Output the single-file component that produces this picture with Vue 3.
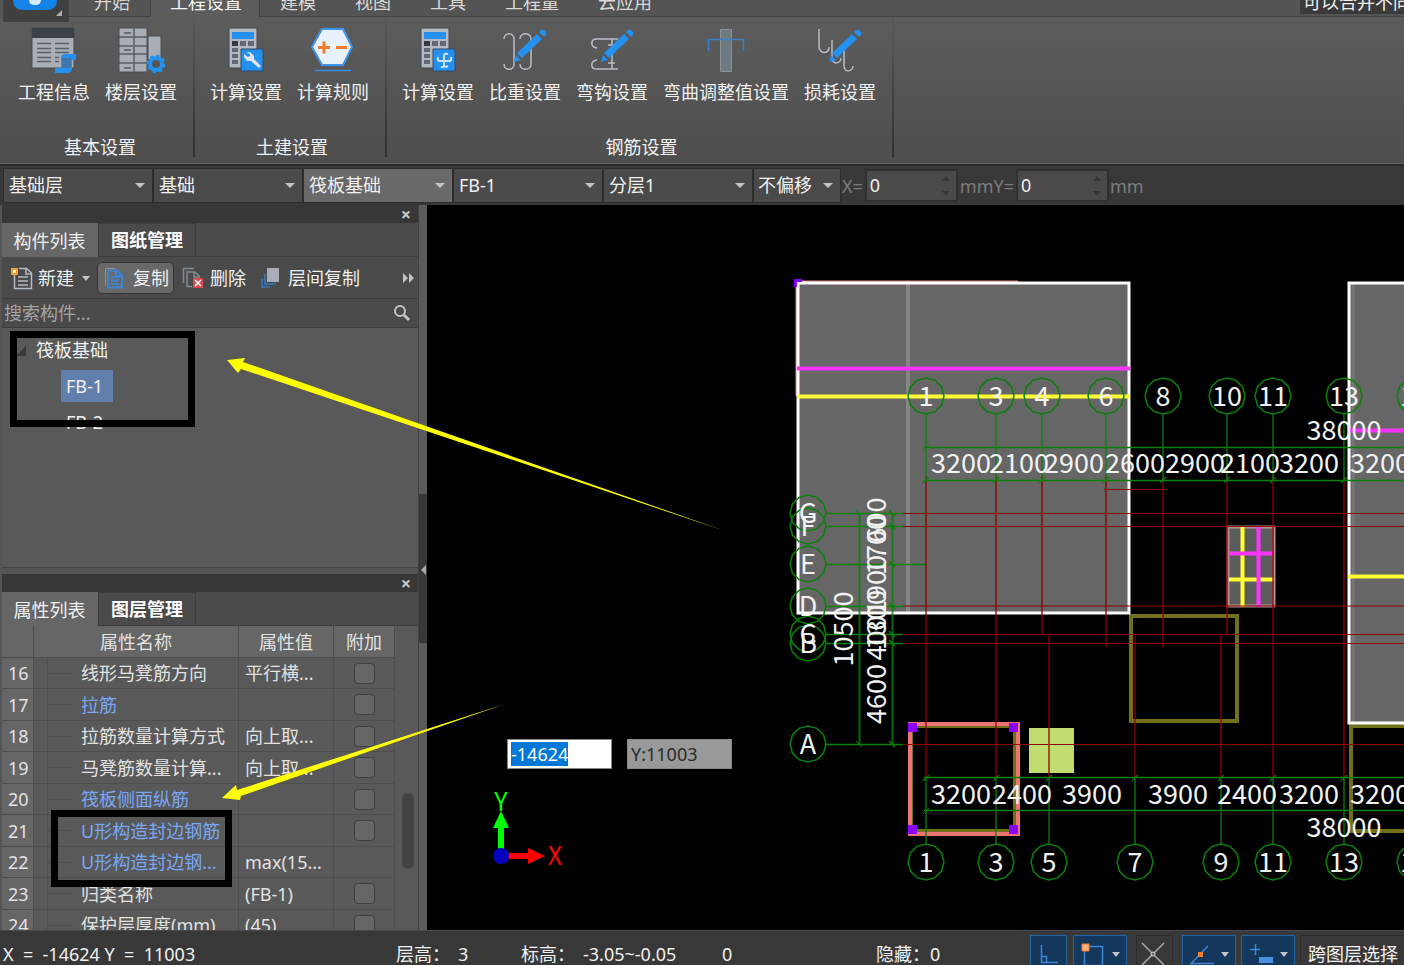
<script setup>
import { ref, onMounted } from 'vue'

const xField = ref(null)

const tabs = ['开始', '工程设置', '建模', '视图', '工具', '工程量', '云应用']
const groups = [
  { title: '基本设置', tools: [{ icon: 'info', label: '工程信息' }, { icon: 'floors', label: '楼层设置' }] },
  { title: '土建设置', tools: [{ icon: 'calc', label: '计算设置' }, { icon: 'rule', label: '计算规则' }] },
  {
    title: '钢筋设置',
    tools: [
      { icon: 'calcbar', label: '计算设置' },
      { icon: 'weight', label: '比重设置' },
      { icon: 'hook', label: '弯钩设置' },
      { icon: 'bend', label: '弯曲调整值设置' },
      { icon: 'loss', label: '损耗设置' }
    ]
  }
]
const pickers = [
  { name: '楼层', value: '基础层' },
  { name: '类别', value: '基础' },
  { name: '构件类型', value: '筏板基础', on: true },
  { name: '构件', value: 'FB-1' },
  { name: '分层', value: '分层1' },
  { name: '偏移', value: '不偏移', small: true }
]
const rows = [
  { n: 16, name: '线形马凳筋方向', value: '平行横...', check: true },
  { n: 17, name: '拉筋', value: '', check: true, link: true },
  { n: 18, name: '拉筋数量计算方式', value: '向上取...', check: true },
  { n: 19, name: '马凳筋数量计算...', value: '向上取...', check: true },
  { n: 20, name: '筏板侧面纵筋', value: '', check: true, link: true },
  { n: 21, name: 'U形构造封边钢筋', value: '', check: true, link: true },
  { n: 22, name: 'U形构造封边钢...', value: 'max(15...', check: false, link: true },
  { n: 23, name: '归类名称', value: '(FB-1)', check: true },
  { n: 24, name: '保护层厚度(mm)', value: '(45)', check: true }
]

const ring = Array.from({ length: 12 }, (_, i) => {
  const a = (i * Math.PI) / 6
  return `${Math.round(Math.cos(a) * 180) / 10},${Math.round(Math.sin(a) * 180) / 10}`
}).join(' ')

const topAxes = [[926, '1'], [996, '3'], [1042, '4'], [1106, '6'], [1163, '8'], [1227, '10'], [1273, '11'], [1344, '13'], [1415, '14']]
const bottomAxes = [[926, '1'], [996, '3'], [1049, '5'], [1135, '7'], [1221, '9'], [1273, '11'], [1344, '13'], [1415, '14']]
const sideAxes = [[513, 'G'], [526, 'F'], [564, 'E'], [606, 'D'], [634, 'C'], [643, 'B'], [744, 'A']]
const topDims = [[961, '3200'], [1019, '2100'], [1074, '2900'], [1135, '2600'], [1195, '2900'], [1250, '2100'], [1309, '3200'], [1380, '3200']]
const bottomDims = [[961, '3200'], [1022, '2400'], [1092, '3900'], [1178, '3900'], [1247, '2400'], [1309, '3200'], [1380, '3200']]
const sideDims = [[520, '600'], [545, '1700'], [585, '1900'], [620, '1300'], [638, '400'], [694, '4600']]
const redColumns = [[926, 476, 777], [996, 476, 777], [1042, 476, 634], [1106, 476, 647], [1163, 476, 647], [1227, 476, 634], [1273, 476, 777], [1344, 476, 777], [1049, 634, 777], [1135, 634, 777], [1221, 634, 777]]

onMounted(() => {
  xField.value.focus()
  xField.value.select()
})
</script>

<template>
  <div class="app">
    <header class="tabbar">
      <button class="logo" aria-label="菜单">
        <svg width="66" height="22" viewBox="0 0 66 22">
          <path d="M10 -8h44v8q0 10-11 10h-22q-11 0-11-10z" fill="#1683e8" />
          <path d="M26 0h12q0 5-6 5t-6-5z" fill="#d8ebff" />
          <path d="M59 10v6h-6z" fill="#b0b0b0" />
        </svg>
      </button>
      <nav class="tabs">
        <button v-for="(t, i) in tabs" :key="t" :class="{ first: i === 0, active: i === 1 }">{{ t }}</button>
      </nav>
      <div class="hint">可以合并不同层</div>
    </header>

    <section class="ribbon">
      <div v-for="g in groups" :key="g.title" class="group">
        <div class="tools">
          <button v-for="t in g.tools" :key="t.icon" class="tool">
            <svg width="48" height="48" viewBox="0 0 48 48" fill="none">
              <template v-if="t.icon === 'info'">
                <path d="M2 2h42v40H2z" fill="#a9adb6" stroke="#484c52" />
                <path d="M2 2h42v10H2z" fill="#3b3f48" />
                <path d="M7 17.500h14M25 17.500h14M7 22.500h14M25 22.500h14M7 26.500h14M25 26.500h14M7 31.500h14M25 31.500h4M7 35.500h14M25 35.500h4" stroke="#5b5f68" stroke-width="1.500" />
                <path d="M31 31q0-3 4-3h11v6h-4v8q0 5-4 5H25v-5h6z" fill="#2490f0" />
                <path d="M32 32h9v10h-9z" fill="#3f74ac" />
              </template>
              <template v-else-if="t.icon === 'floors'">
                <path d="M2 2h28v44H2z" fill="#a9adb6" stroke="#484c52" />
                <path d="M31 10h13v24H31z" fill="#a9adb6" stroke="#484c52" />
                <path d="M17 2v44M2 11h28M2 20h28M2 28h28M2 37h28M7 7h7M7 24h7M7 42h7" stroke="#585d66" stroke-width="1.500" />
                <circle cx="39" cy="38" r="6" fill="#555" stroke="#2490f0" stroke-width="4" />
                <circle cx="39" cy="38" r="8" stroke="#2490f0" stroke-width="3" stroke-dasharray="3 3.300" />
              </template>
              <template v-else-if="t.icon === 'calc' || t.icon === 'calcbar'">
                <path d="M7 2h28v40H7z" fill="#b4b8c1" stroke="#40464e" />
                <path d="M10 6h22v7H10z" fill="#2490f0" />
                <path d="M10 15h6v5h-6z" fill="#343943" />
                <path d="M18 15h6v5h-6zM26 15h6v5h-6zM10 22h6v4h-6zM10 28h6v4h-6zM10 34h6v4h-6z" fill="#626872" />
                <path d="M19 23h22v22H19z" fill="#2490f0" stroke="#344a62" />
                <path v-if="t.icon === 'calc'" d="M24 27l4-1 4 4 0 3 7 7-2 2-8-7-4 0-3-4v-3l4 3 2-1 0-2z" fill="#dfe5ee" />
                <path v-else d="M34 28q-4-1-4 2v9q0 3-3 2M24 31q-1 4 2 4h9q3 0 2-4M34 40q-3 2-4-1" stroke="#cfe4fa" stroke-width="2" />
              </template>
              <template v-else-if="t.icon === 'rule'">
                <path d="M3 21L13 3h21l9 18-9 18H13z" fill="#e8f2ff" stroke="#3e95ec" stroke-width="2" />
                <path d="M9 21.500h12M15 15.500v12M27 21.500h11" stroke="#f07c2c" stroke-width="3" />
                <path d="M6 44.500h36" stroke="#3e8fe0" stroke-width="1.500" />
              </template>
              <template v-else-if="t.icon === 'bend'">
                <path d="M18.500 3.500h11v42h-11z" fill="#6f7b80" stroke="#87949a" />
                <path d="M6.500 25V13.500h35V25" stroke="#3f80c4" stroke-width="1.500" />
              </template>
              <template v-else>
                <path v-if="t.icon === 'weight'" d="M3 13c0-7 10-7 10 0v25c0 7-10 7-10 0M19 13c0-7 11-7 11 0v25c0 7-11 7-11 0" stroke="#b9bec6" stroke-width="1.500" />
                <path v-if="t.icon === 'hook'" d="M30 13H9c-7 0-7 8 0 9M30 43H9c-7 0-7-8 0-9M24 13v30M20 19h7M20 37h7" stroke="#b9bec6" stroke-width="1.500" />
                <path v-if="t.icon === 'loss'" d="M3 3v17c0 8 10 9 10 1M16 14v18c0 7 9 6 9 0M28 24v16c0 7 9 6 9 0" stroke="#b9bec6" stroke-width="1.500" />
                <path d="M13 36l2-7 5 5zM16 27L36 8l5 5-20 19zM38 6l2-2q2-1 3 0l2 2q1 2 0 3l-2 2z" fill="#2490f0" />
              </template>
            </svg>
            <span>{{ t.label }}</span>
          </button>
        </div>
        <h2>{{ g.title }}</h2>
      </div>
    </section>

    <section class="options">
      <div v-for="p in pickers" :key="p.name" class="picker" :class="{ on: p.on, small: p.small }">
        <select :aria-label="p.name"><option>{{ p.value }}</option></select>
      </div>
      <label for="off-x">X=</label>
      <div class="spin"><input id="off-x" type="text" value="0" /></div>
      <label for="off-y">mmY=</label>
      <div class="spin"><input id="off-y" type="text" value="0" /></div>
      <span class="unit">mm</span>
    </section>

    <main class="work">
      <aside class="side">
        <div class="panels">
          <section class="panel list">
            <div class="bar"><button aria-label="关闭">×</button></div>
            <div class="ptabs"><button class="active">构件列表</button><button>图纸管理</button></div>
            <div class="actions">
              <button class="new">
                <svg width="24" height="24" viewBox="0 0 24 24" fill="none">
                  <path d="M4.500 9v13.500h17V7l-5-4.500H9M16 3v5h5M8 11h10M8 15h10M8 19h10" stroke="#b4bbc2" stroke-width="1.500" />
                  <path d="M1 2h7v7H1z" fill="#f6a030" /><path d="M3 4h3v3H3z" fill="#fff0c0" />
                </svg>
                新建<i class="caret"></i>
              </button>
              <button class="copy">
                <svg width="24" height="24" viewBox="0 0 24 24" fill="none">
                  <path d="M3.500 20V2.500H13" stroke="#8b9298" />
                  <path d="M6 4.500h9l5 5v12H6zM9 11h8M9 14.500h8M9 18h8M14 5v5h5" stroke="#3c85d6" stroke-width="2" />
                </svg>
                复制
              </button>
              <button class="del">
                <svg width="24" height="24" viewBox="0 0 24 24" fill="none">
                  <path d="M2.500 17V2.500H13M11 20.500H6V6h8l5 5M13 6v5h6" stroke="#7f8b93" stroke-width="1.500" />
                  <path d="M12 12h10v10H12z" fill="#d84a50" /><path d="M14 14l6 6M20 14l-6 6" stroke="#fff" stroke-width="1.500" />
                </svg>
                删除
              </button>
              <button class="floorcopy">
                <svg width="24" height="24" viewBox="0 0 24 24" fill="none">
                  <path d="M7 2h12v14H7z" fill="#a9adb8" />
                  <path d="M5 8v10h11M2 13v8h8" stroke="#356fa8" stroke-width="2" />
                </svg>
                层间复制
              </button>
              <svg class="more" width="12" height="10" viewBox="0 0 12 10"><path d="M0 0l5 5-5 5zM6 0l5 5-5 5z" fill="#c4c4c4" /></svg>
            </div>
            <div class="search">
              <input type="text" placeholder="搜索构件..." aria-label="搜索构件" />
              <svg width="18" height="18" viewBox="0 0 18 18" fill="none"><circle cx="7" cy="7" r="5" stroke="#c4c4c4" stroke-width="2" /><path d="M11 11l5 5" stroke="#c4c4c4" stroke-width="3" /></svg>
            </div>
            <ul class="tree">
              <li class="root">筏板基础</li>
              <li><span class="sel">FB-1</span></li>
              <li><span>FB-2</span></li>
            </ul>
          </section>

          <section class="panel props">
            <div class="bar"><button aria-label="关闭">×</button></div>
            <div class="ptabs"><button class="active">属性列表</button><button>图层管理</button></div>
            <div class="grid">
              <table>
                <colgroup><col class="c1" /><col class="c2" /><col class="c3" /><col class="c4" /></colgroup>
                <thead><tr><th></th><th>属性名称</th><th>属性值</th><th>附加</th></tr></thead>
                <tbody>
                  <tr v-for="r in rows" :key="r.n">
                    <td class="num">{{ r.n }}</td>
                    <td class="name" :class="{ link: r.link }">{{ r.name }}</td>
                    <td class="val">{{ r.value }}</td>
                    <td class="chk"><input v-if="r.check" type="checkbox" :aria-label="r.name" /></td>
                  </tr>
                </tbody>
              </table>
              <div class="thumb"></div>
            </div>
          </section>
        </div>
        <div class="splitter">
          <svg width="6" height="10" viewBox="0 0 6 10"><path d="M6 0v10L1 5z" fill="#aaa" /></svg>
        </div>
      </aside>

      <section class="canvas">
        <svg class="drawing" width="100%" height="100%">
          <g transform="translate(-427 -205)" fill="none">
            <path d="M798 283h331v330H798zM1349 283h90v440h-90z" fill="#666" />
            <path d="M908 284v328" stroke="#858585" stroke-width="4" />
            <path d="M1353 284v438" stroke="#777" stroke-width="3" />
            <path d="M1131 616h106v105h-106zM1351 726h90v105h-90z" stroke="#70701a" stroke-width="4" />
            <path d="M1018 282H797V396" stroke="#d98585" stroke-width="3" />
            <path d="M798 283h331v330H798zM1349 283h90v440h-90z" stroke="#fff" stroke-width="3" />
            <path d="M797 368.500h333M1348 430.500h80" stroke="#ff33ff" stroke-width="4" />
            <path d="M797 396.500h333M1348 576.500h80" stroke="#ffff33" stroke-width="4" />
            <path d="M794 279h8v3h-5v5h-3z" fill="#8000ff" />

            <path d="M1228 527h46v79h-46z" fill="#5c5c5c" stroke="#b69090" stroke-width="3" />
            <path d="M1242.500 526v81M1229 579.500h45" stroke="#ffff33" stroke-width="4" />
            <path d="M1258.500 526v81M1229 553.500h45" stroke="#ff33ff" stroke-width="4" />

            <path d="M1029 728h45v45h-45z" fill="#c1dd70" />
            <path d="M911 726h104v105H911z" stroke="#70701a" stroke-width="4" />
            <path d="M910 724h108v110H910z" stroke="#ee7474" stroke-width="4" />
            <path d="M908 723h9v9h-9zM1009 723h9v9h-9zM908 825h9v9h-9zM1009 825h9v9h-9z" fill="#8c00ff" />

            <g stroke="#900000" stroke-opacity="0.650">
              <path v-for="c in redColumns" :key="c[0]" :d="`M${c[0]} ${c[1]}V${c[2]}`" stroke-width="2" />
            </g>
            <path d="M903 513.500h520M903 526.500h520M903 606h520M903 634.500h520M903 643.500h520M903 744.500h520M1104 489.500h61" stroke="#8a0000" />

            <g stroke="#0a800a">
              <path d="M924 447.500h500M924 480.500h500M924 777.500h500M924 810.500h500" stroke-width="1.500" />
              <path v-for="a in topAxes" :key="a[0]" :d="`M${a[0]} 414V480M${a[0] - 3} 483l6-6`" stroke-opacity="0.850" stroke-width="1.500" />
              <path v-for="a in bottomAxes" :key="a[0]" :d="`M${a[0]} 777V844M${a[0] - 3} 781l6-6`" stroke-opacity="0.850" stroke-width="1.500" />
              <path d="M923 451l6-6M923 814l6-6" />
              <path d="M859.500 513v232M892.500 513v232" stroke-width="2" stroke-opacity="0.800" />
              <path v-for="s in sideAxes" :key="s[0]" :d="`M826 ${s[0]}.5H${s[1] === 'E' ? 925 : 903}M889 ${s[0] - 3}l6 6`" stroke-width="1.500" />
              <path d="M856 510l6 6M856 741l6 6" />
              <g stroke-width="1.500">
                <polygon v-for="a in topAxes" :key="a[0]" :points="ring" :transform="`translate(${a[0]} 396)`" />
                <polygon v-for="a in bottomAxes" :key="a[0]" :points="ring" :transform="`translate(${a[0]} 862)`" />
                <polygon v-for="s in sideAxes" :key="s[0]" :points="ring" :transform="`translate(808 ${s[0]})`" />
              </g>
            </g>

            <g class="cad" fill="#f2f2f2" text-anchor="middle">
              <text v-for="a in topAxes" :key="a[0]" :x="a[0]" y="406">{{ a[1] }}</text>
              <text v-for="a in bottomAxes" :key="a[0]" :x="a[0]" y="872">{{ a[1] }}</text>
              <text v-for="s in sideAxes" :key="s[0]" x="808" :y="s[0] + 10">{{ s[1] }}</text>
              <text v-for="d in topDims" :key="d[0]" :x="d[0]" y="473">{{ d[1] }}</text>
              <text v-for="d in bottomDims" :key="d[0]" :x="d[0]" y="804">{{ d[1] }}</text>
              <text v-for="d in sideDims" :key="d[0]" :transform="`translate(886 ${d[0]}) rotate(-90)`">{{ d[1] }}</text>
              <text transform="translate(853 629) rotate(-90)">10500</text>
              <text x="1344" y="440">38000</text>
              <text x="1344" y="837">38000</text>
            </g>

            <path d="M498 850v-22h-5l8-17 8 17h-5v22z" fill="#0f0" />
            <path d="M507 853h21v-5l17 8-17 8v-5h-21z" fill="#f00" />
            <circle cx="501" cy="856" r="8" fill="#0000c0" />
            <g class="ucs" text-anchor="middle">
              <text x="501" y="811" fill="#0f0">Y</text>
              <text x="555" y="865" fill="#f00">X</text>
            </g>
          </g>
        </svg>
        <div class="coords">
          <input ref="xField" class="cx" type="text" value="-14624" aria-label="X" />
          <input class="cy" type="text" value="Y:11003" aria-label="Y" readonly />
        </div>
      </section>
    </main>

    <footer class="status">
      <span class="pos">X&nbsp; =&nbsp; -14624 Y&nbsp; =&nbsp; 11003</span>
      <span class="height">层高：<b>3</b></span>
      <span class="level">标高：<b>-3.05~-0.05</b></span>
      <span class="zero">0</span>
      <span class="hidden">隐藏：<b>0</b></span>
      <button class="sq on" aria-label="正交">
        <svg width="20" height="20" viewBox="0 0 20 20" fill="none"><path d="M2.500 1v17.500H19M2.500 12.500h5v6" stroke="#3f86d8" stroke-width="1.500" /></svg>
      </button>
      <button class="wide on" aria-label="捕捉">
        <svg width="24" height="24" viewBox="0 0 24 24" fill="none"><path d="M3.500 4.500h18v19h-18z" stroke="#3f86d8" stroke-width="1.500" /><path d="M1 2h7v7H1z" fill="#ffb080" stroke="#ef7b30" /></svg><i class="caret"></i>
      </button>
      <button class="sq" aria-label="交点">
        <svg width="24" height="24" viewBox="0 0 24 24" fill="none"><path d="M1 1l22 22M23 1L1 23" stroke="#aaa" stroke-width="1.500" /><circle cx="12" cy="12" r="2" fill="#666" stroke="#ddd" /></svg>
      </button>
      <button class="wide angle on" aria-label="角度">
        <svg width="24" height="24" viewBox="0 0 24 24" fill="none"><path d="M18 4L1 21.500h23" stroke="#3f86d8" stroke-width="1.500" /><path d="M8 10h5v5H8z" fill="#ef7b30" /></svg><i class="caret"></i>
      </button>
      <button class="wide on" aria-label="动态输入">
        <svg width="24" height="24" viewBox="0 0 24 24" fill="none"><path d="M1 7.500h10M6.500 2v11" stroke="#3f86d8" stroke-width="1.500" /><path d="M10 15h14v6H10z" fill="#4a90e0" /></svg><i class="caret"></i>
      </button>
      <button class="cross">跨图层选择</button>
    </footer>

    <svg class="marks" width="100%" height="100%" aria-hidden="true">
      <path d="M13.500 334.500h178v89h-178zM54.500 813.500h174v70h-174z" fill="none" stroke="#000" stroke-width="7" />
      <path d="M227 360l18-2-2 4L725 531 241 369l-3 4zM222 798l14-13 1 5L505 704 241 796l-1 4z" fill="#ff0" />
    </svg>
  </div>
</template>

<style>
body { background: #383838; overflow: hidden; }
</style>

<style scoped>
.app {
  position: relative;
  display: flex;
  flex-direction: column;
  height: 100vh;
  overflow: hidden;
  background: #383838;
  color: #f0f0f0;
  font: 18px/24px "Noto Sans", "Noto Sans CJK SC", sans-serif;
}
.app * { box-sizing: border-box; }
button, input, select { font: inherit; color: inherit; border: 0; background: none; padding: 0; margin: 0; border-radius: 0; }
button { white-space: nowrap; }
b { font-weight: 400; }
.caret { display: inline-block; border: 4px solid transparent; border-top: 5px solid #c4c4c4; border-bottom: 0; }

.tabbar { position: relative; display: flex; flex: none; height: 17px; padding-left: 69px; background: #545454; }
.logo { position: absolute; left: 3px; top: 0; z-index: 1; background: #404040; height: 22px; }
.logo svg { display: block; }
.tabs { display: flex; flex: 1; align-items: flex-end; border-bottom: 1px solid #414141; height: 17px; }
.tabs button { line-height: 24px; height: 26px; padding: 0 19px 2px 20px; color: #d8d8d8; flex: none; }
.tabs .first { padding-left: 25px; padding-right: 20px; border-right: 1px solid #414141; }
.tabs .active { height: 27px; padding: 0 17px 3px 19px; background: #5c5c5c; border-right: 1px solid #414141; color: #f4f4f4; margin-bottom: -1px; }
.hint { position: absolute; right: 0; bottom: 3px; width: 104px; padding-left: 3px; overflow: hidden; white-space: nowrap; background: #3a3a3a; line-height: 24px; }

.ribbon { display: flex; flex: none; height: 147px; background: linear-gradient(#5c5c5c, #4e4e4e); border-bottom: 1px solid #626262; }
.group { display: flex; flex-direction: column; padding: 9px 16px 0 15px; margin-bottom: 6px; border-right: 2px solid #3d3d3d; border-image: linear-gradient(#5a5a5a, #303030) 1; }
.group:first-child { padding-left: 18px; }
.tools { display: flex; gap: 15px; }
.tool { display: flex; flex-direction: column; align-items: center; gap: 6px; line-height: 24px; }
.group h2 { margin: 31px 0 0; padding-left: 5px; font-size: 18px; font-weight: 400; line-height: 24px; text-align: center; }

.options { display: flex; flex: none; align-items: center; height: 41px; padding-left: 3px; background: #383838; border-top: 2px solid #2b2b2b; color: #7c7c7c; }
.options label { padding: 0 1px; }
.picker { position: relative; width: 150px; height: 35px; border: 1px solid #2c2c2c; background: #4a4a4a; color: #f0f0f0; }
.picker::after { content: ""; position: absolute; right: 7px; top: 14px; border: 5px solid transparent; border-top-color: #c4c4c4; border-bottom: 0; pointer-events: none; }
.picker select { appearance: none; display: block; width: 100%; height: 33px; padding: 0 0 2px 5px; outline: 0; }
.picker.on { background: #696969; }
.picker.small { width: 88px; }
.picker.small select { padding-left: 4px; }
.spin { position: relative; width: 93px; height: 33px; background: #4a4a4a; border: 2px solid #2f2f2f; margin: 0 1px; }
.spin input { display: block; width: 70px; height: 29px; padding: 0 0 2px 3px; color: #f0f0f0; outline: 0; }
.spin::before, .spin::after { content: ""; position: absolute; right: 6px; border: 4px solid transparent; }
.spin::before { top: 5px; border-bottom: 5px solid #363636; border-top: 0; }
.spin::after { bottom: 4px; border-top: 5px solid #363636; border-bottom: 0; }

.work { display: flex; flex: 1; min-height: 0; }
.side { display: flex; flex: none; width: 427px; background: #555; }
.panels { display: flex; flex-direction: column; width: 419px; padding-left: 2px; border-right: 1px solid #404040; }
.panel { display: flex; flex-direction: column; }
.list { flex: none; height: 363px; border-bottom: 1px solid #424242; margin-bottom: 6px; }
.bar { flex: none; height: 18px; background: #373737; text-align: right; }
.bar button { display: block; width: 24px; height: 18px; margin-left: auto; line-height: 18px; color: #c8c8c8; font-weight: 700; }
.ptabs { display: flex; flex: none; height: 34px; background: #4a4a4a; border-bottom: 1px solid #3c3c3c; }
.ptabs button { width: 98px; color: #fff; font-weight: 700; border: 1px solid #3c3c3c; border-bottom: 0; padding-bottom: 1px; }
.ptabs button.active { width: 96px; height: 34px; background: #666; font-weight: 400; color: #f0f0f0; border: 0; padding: 2px 1px 0 0; }
.actions { display: flex; flex: none; align-items: center; height: 42px; padding-top: 1px; background: #4a4a4a; border-bottom: 1px solid #3c3c3c; }
.actions button { display: flex; align-items: center; gap: 4px; height: 32px; }
.new { padding-left: 8px; }
.actions .new .caret { margin-left: 4px; }
.actions .copy { gap: 7px; margin-left: 7px; padding: 0 4px; background: #686868; border: 1px solid #353535; border-radius: 5px; }
.actions .del { margin-left: 7px; gap: 5px; }
.actions .floorcopy { margin-left: 14px; gap: 4px; }
.more { margin-left: auto; margin-right: 3px; }
.search { display: flex; flex: none; align-items: center; height: 29px; background: #4a4a4a; border-bottom: 1px solid #3c3c3c; padding-right: 7px; }
.search input { flex: 1; height: 28px; padding-left: 2px; outline: 0; }
.search input::placeholder { color: #a4a4a4; opacity: 1; }
.tree { flex: 1; margin: 0; padding: 4px 0 0; list-style: none; background: #595959; }
.tree li { position: relative; height: 36px; line-height: 36px; padding-left: 59px; }
.tree .root { padding-left: 34px; }
.tree .root::before { content: ""; position: absolute; left: 14px; top: 14px; border: 5px solid #383838; border-top-color: transparent; border-left-color: transparent; }
.tree span { display: inline-block; height: 32px; line-height: 32px; padding: 0 10px 0 5px; }
.tree .sel { background: #627eac; }
.props { flex: 1; min-height: 0; }
.grid { position: relative; flex: 1; overflow: hidden; background: #595959; }
table { table-layout: fixed; width: 393px; border-collapse: separate; border-spacing: 0; color: #e2e2e2; }
.c1 { width: 32px; } .c2 { width: 205px; } .c3 { width: 95px; } .c4 { width: 61px; }
th, td { padding: 0; height: 31px; font-weight: 400; border-right: 1px solid #4d4d4d; border-bottom: 1px solid #4d4d4d; white-space: nowrap; overflow: hidden; line-height: 24px; }
tr:nth-child(even) td { height: 32px; }
th { height: 32px; background: #666; }
.num { background: #666; text-align: left; padding-left: 6px; }
.name { position: relative; padding-left: 47px; }
.name::before { content: ""; position: absolute; left: 13px; top: 0; bottom: 0; border-left: 1px solid #4f4f4f; }
.name::after { content: ""; position: absolute; left: 13px; top: 15px; width: 25px; border-top: 1px solid #4f4f4f; }
.link { color: #7aa7f5; }
.val { padding-left: 6px; }
.chk { text-align: center; }
.chk input { appearance: none; display: block; width: 21px; height: 21px; margin: 0 auto; border: 1px solid #3e3e3e; border-radius: 4px; background: #666; }
.thumb { position: absolute; right: 4px; top: 167px; width: 12px; height: 76px; border-radius: 6px; background: #434343; }
.splitter { position: relative; width: 8px; background: linear-gradient(#5a5a5a 289px, #383838 289px, #383838 438px, #5a5a5a 438px); }
.splitter svg { position: absolute; right: 1px; top: 360px; }

.canvas { position: relative; flex: 1; min-width: 0; background: #000; overflow: hidden; }
.drawing { display: block; position: absolute; inset: 0; }
.cad { font: 27px "Noto Sans CJK SC", sans-serif; }
.ucs { font: 25px "Noto Sans CJK SC", sans-serif; }
.coords { position: absolute; left: 80px; top: 534px; display: flex; gap: 15px; }
.coords input { width: 105px; height: 30px; padding: 0 3px; border: 1px solid #888; outline: 0; line-height: 26px; }
.cx { background: #fff; color: #222; }
.cx::selection { background: #0078d7; color: #fff; }
.coords .cy { background: #999; color: #2a2a2a; }

.status { display: flex; flex: none; height: 35px; padding-top: 4px; border-top: 1px solid #4a4a4a; background: #383838; overflow: hidden; }
.status > * { flex: none; height: 38px; line-height: 38px; }
.pos { width: 396px; padding-left: 3px; }
.height { width: 125px; }
.height b { margin-left: 8px; }
.level { width: 201px; }
.level b { margin-left: 8px; }
.zero { width: 154px; }
.status .hidden { flex: 1; }
.status button { display: flex; align-items: center; justify-content: center; border: 1px solid #2c2c2c; }
.status .on { background: #14375c; border: 1px solid #2465a4; }
.sq { width: 37px; margin-right: 6px; }
.status .sq:not(.on) { margin: 0 9px 0 4px; }
.status .sq:not(.on) svg { margin-right: 3px; }
.wide { width: 54px; gap: 7px; margin-right: 5px; }
.status .cross { width: 104px; justify-content: flex-start; padding-left: 7px; border-right: 0; }

.marks { position: absolute; inset: 0; pointer-events: none; }
</style>
